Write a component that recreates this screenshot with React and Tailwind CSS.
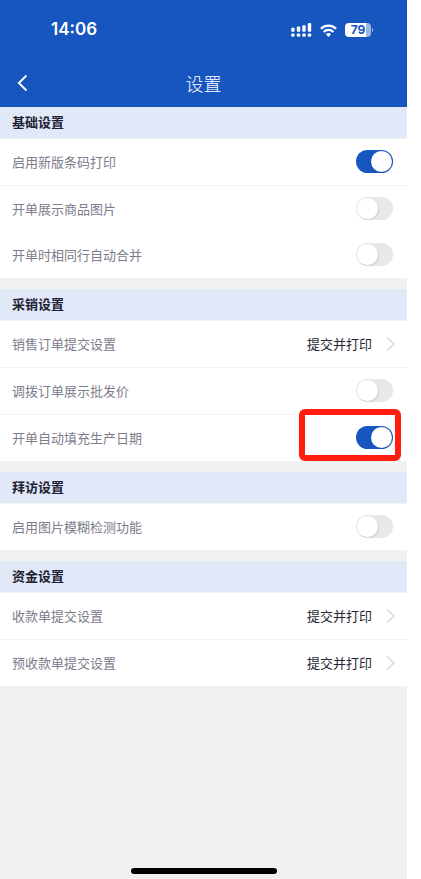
import React, { useState } from "react";

const sections = [
  {
    title: "基础设置",
    rows: [
      { id: "newBarcode", label: "启用新版条码打印", type: "switch" },
      { id: "showImage", label: "开单展示商品图片", type: "switch" },
      { id: "mergeRows", label: "开单时相同行自动合并", type: "switch", noDivider: true },
    ],
  },
  {
    title: "采销设置",
    rows: [
      { id: "saleSubmit", label: "销售订单提交设置", type: "link", value: "提交并打印" },
      { id: "wholesalePrice", label: "调拨订单展示批发价", type: "switch" },
      { id: "fillDate", label: "开单自动填充生产日期", type: "switch", marked: true },
    ],
  },
  {
    title: "拜访设置",
    rows: [{ id: "blurCheck", label: "启用图片模糊检测功能", type: "switch" }],
  },
  {
    title: "资金设置",
    rows: [
      { id: "receiptSubmit", label: "收款单提交设置", type: "link", value: "提交并打印" },
      { id: "prepaySubmit", label: "预收款单提交设置", type: "link", value: "提交并打印" },
    ],
  },
];

const StatusBar = () => (
  <div className="flex h-[60px] items-center justify-between pl-[51px] pr-[34px]">
    <span className="font-['Inter',sans-serif] text-[17px] font-semibold">14:06</span>
    <div className="flex items-center gap-2">
      {/* Dual SIM signal */}
      <svg className="h-[14px] w-[21px]" viewBox="0 0 21 14" fill="currentColor" aria-hidden="true">
        <rect x="0.2" y="4.8" width="3.4" height="4" rx="1" />
        <rect x="5.8" y="3.6" width="3.4" height="5.2" rx="1" />
        <rect x="11.3" y="2.2" width="3.4" height="6.6" rx="1" />
        <rect x="16.8" y="0" width="3.4" height="8.8" rx="1" />
        <rect x="0.2" y="10.4" width="3.4" height="3.4" rx="1.2" />
        <rect x="5.8" y="10.4" width="3.4" height="3.4" rx="1.2" />
        <rect x="11.3" y="10.4" width="3.4" height="3.4" rx="1.2" />
        <rect x="16.8" y="10.4" width="3.4" height="3.4" rx="1.2" />
      </svg>
      <svg className="h-[13px] w-[17px]" viewBox="0 0 17 13" fill="none" stroke="currentColor" strokeWidth="2.3" aria-hidden="true">
        <path d="M0.9 4.8a10.8 10.8 0 0 1 15.2 0" />
        <path d="M3.6 8a6.9 6.9 0 0 1 9.8 0" />
        <path d="M8.5 13L5.9 10.3a3.7 3.7 0 0 1 5.2 0z" fill="currentColor" stroke="none" />
      </svg>
      {/* Battery */}
      <div className="flex items-center gap-px">
        <div className="flex h-[14px] w-[26px] items-center justify-center rounded bg-linear-to-r from-white from-79% to-[#9db6e3] to-79% font-['Inter',sans-serif] text-xs font-bold text-[#1856bf]">
          79
        </div>
        <span className="h-1 w-px rounded-r bg-[#9db6e3]"></span>
      </div>
    </div>
  </div>
);

const Switch = ({ id, checked, onChange }) => (
  <input
    id={id}
    type="checkbox"
    role="switch"
    checked={checked}
    onChange={onChange}
    className="flex h-[23px] w-[37px] cursor-pointer appearance-none items-center rounded-full bg-[#e8e8e8] px-px before:size-[21px] before:rounded-full before:bg-white before:shadow-[1px_1px_2px_rgba(0,0,0,0.1)] before:content-[''] checked:justify-end checked:bg-[#1856bf]"
  />
);

const SettingRow = ({ row, checked, onToggle }) => {
  const border = row.noDivider ? "" : "border-t border-[#f3f3f6]";

  if (row.type === "link") {
    return (
      <li className={border}>
        <button type="button" className="flex h-[46px] w-full cursor-pointer items-center justify-between px-3 pb-px">
          <span className="text-[#7d7c8b]">{row.label}</span>
          <span className="flex items-center gap-[14px] text-[#25252f]">
            {row.value}
            <svg className="h-4 w-[9px]" viewBox="0 0 9 16" fill="none" stroke="#d5d5da" strokeWidth="1.3" aria-hidden="true">
              <path d="M1 1.5L8 8l-7 6.5" />
            </svg>
          </span>
        </button>
      </li>
    );
  }

  return (
    <li className={`relative ${border}`}>
      <div className="flex h-[46px] items-center justify-between pb-px pl-3 pr-[14px]">
        <label htmlFor={row.id} className="text-[#7d7c8b]">
          {row.label}
        </label>
        <Switch id={row.id} checked={checked} onChange={onToggle} />
      </div>
      {row.marked && (
        <div className="pointer-events-none absolute -top-1.5 right-1.5 h-[52px] w-[102px] rounded-md border-6 border-[#ff1d0f]"></div>
      )}
    </li>
  );
};

const App = () => {
  const [values, setValues] = useState({ newBarcode: true, fillDate: true });

  const toggle = (id) => {
    setValues((prev) => ({ ...prev, [id]: !prev[id] }));
  };

  return (
    <div className="min-h-screen bg-white pr-[14px] font-['Noto_Sans_CJK_SC',sans-serif] text-[13px]">
      <div className="flex min-h-screen flex-col bg-[#f1f1f1]">
        <header className="bg-[#1856bf] text-white">
          <StatusBar />
          <div className="grid h-[47px] grid-cols-[1fr_auto_1fr] items-center pb-px">
            <button type="button" aria-label="返回" className="ml-[17px] flex w-6 cursor-pointer">
              <svg className="h-[18px] w-[11px]" viewBox="0 0 11 18" fill="none" stroke="currentColor" strokeWidth="1.8" aria-hidden="true">
                <path d="M9.5 1.5L1.8 9l7.7 7.5" />
              </svg>
            </button>
            <h1 className="text-lg font-light">设置</h1>
          </div>
        </header>

        {/* Setting groups */}
        <main className="flex grow flex-col gap-[11px]">
          {sections.map((section) => (
            <section key={section.title}>
              <h2 className="flex h-[31px] items-center bg-[#e1e8f8] px-3 pb-px font-bold text-[#1c2233]">
                {section.title}
              </h2>
              <ul className="bg-white">
                {section.rows.map((row) => (
                  <SettingRow
                    key={row.id}
                    row={row}
                    checked={!!values[row.id]}
                    onToggle={() => toggle(row.id)}
                  />
                ))}
              </ul>
            </section>
          ))}
        </main>

        <div className="flex justify-center pb-[5px]">
          <div className="h-1.5 w-[146px] rounded-full bg-black"></div>
        </div>
      </div>
    </div>
  );
};

export default App;
